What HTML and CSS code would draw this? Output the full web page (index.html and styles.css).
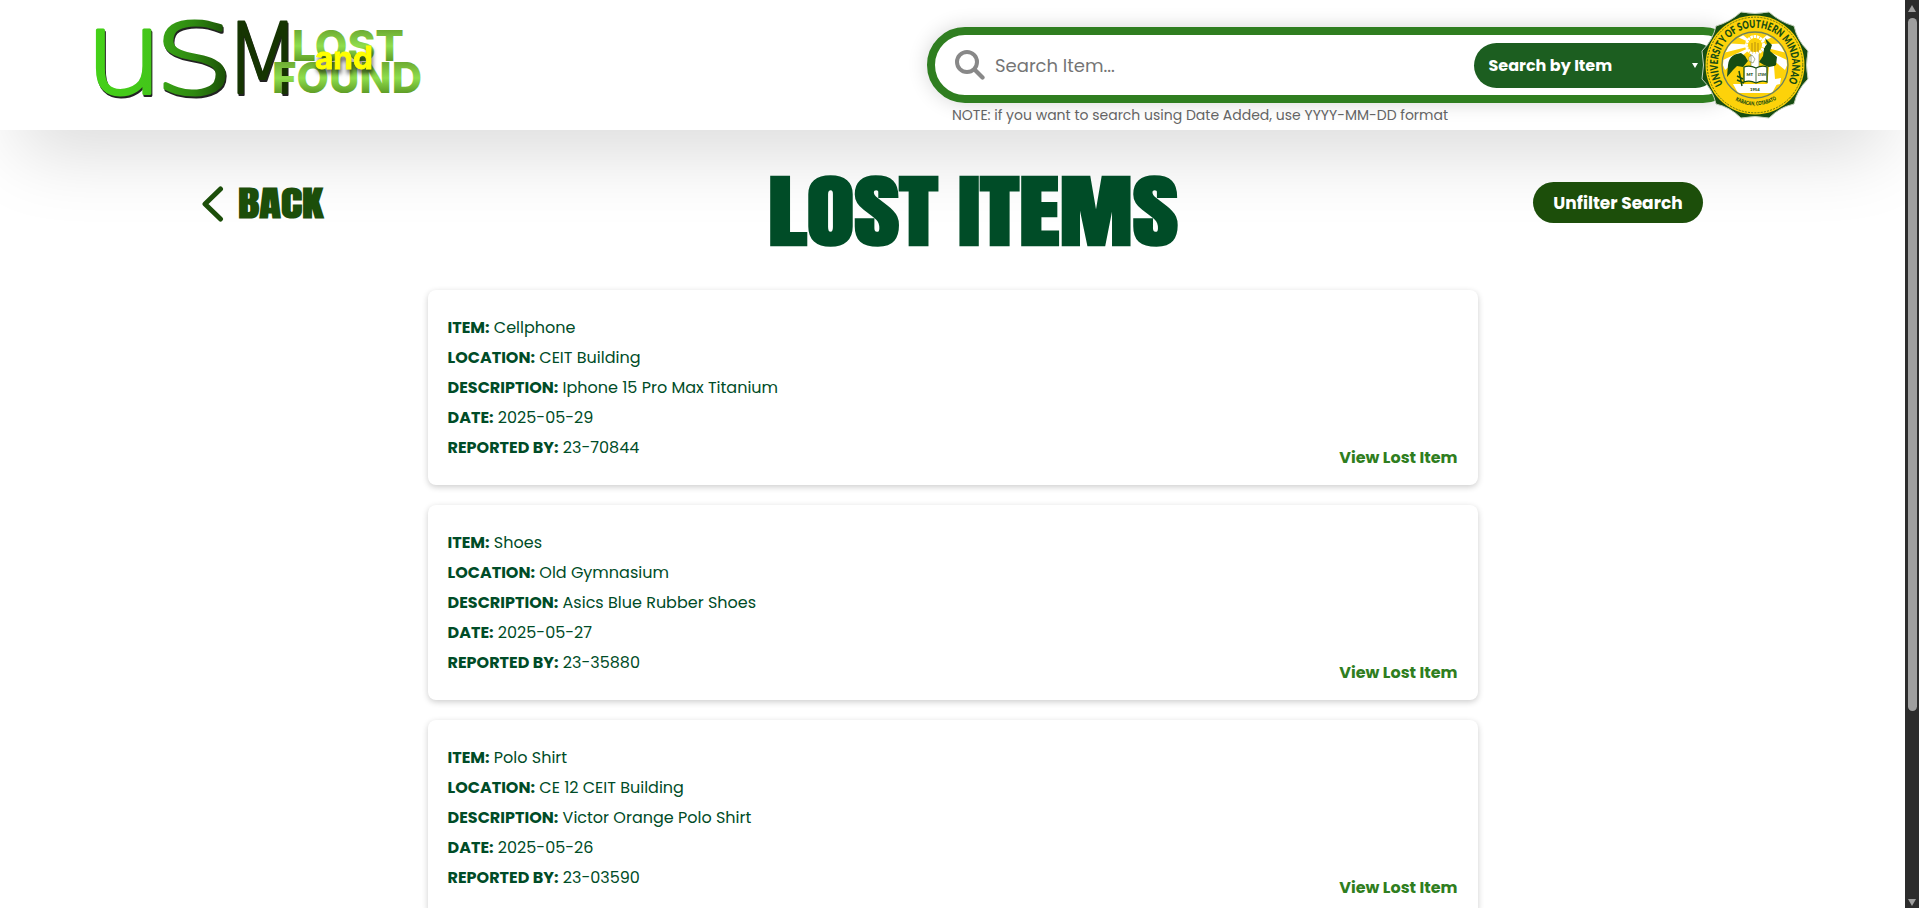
FILE: index.html
```html
<!DOCTYPE html>
<html lang="en">
<head>
<meta charset="utf-8">
<title>USM Lost and Found</title>
<link rel="stylesheet" href="styles.css">
</head>
<body>
<div class="page">
  <header class="header">
    <svg class="logo" viewBox="0 0 340 90" role="img" aria-label="USM Lost and Found">
      <defs>
        <linearGradient id="gu" x1="0" x2="1"><stop offset="0" stop-color="#45d318"/><stop offset="1" stop-color="#43c31a"/></linearGradient>
        <linearGradient id="gs" x1="0" x2="1"><stop offset="0" stop-color="#3cac17"/><stop offset=".5" stop-color="#2e8810"/><stop offset="1" stop-color="#174205"/></linearGradient>
        <linearGradient id="gl" x1="0" y1="0" x2="0" y2="1"><stop offset=".2" stop-color="#6ca931"/><stop offset=".52" stop-color="#8fde4d"/><stop offset=".8" stop-color="#609f27"/></linearGradient>
      </defs>
      <g class="script">
        <text x="-6" y="79" textLength="80" lengthAdjust="spacingAndGlyphs" font-size="115" fill="url(#gu)" stroke="url(#gu)">u</text>
        <text x="64" y="80" textLength="80" lengthAdjust="spacingAndGlyphs" font-size="98" fill="url(#gs)" stroke="url(#gs)">S</text>
        <text x="134" y="79" textLength="77" lengthAdjust="spacingAndGlyphs" font-size="98" fill="#163502" stroke="#163502" stroke-width="2">M</text>
      </g>
      <g class="block" fill="url(#gl)">
        <text x="202" y="47" textLength="112" lengthAdjust="spacingAndGlyphs">LOST</text>
        <text x="182" y="79" textLength="150" lengthAdjust="spacingAndGlyphs">FOUND</text>
      </g>
      <text class="and" x="225" y="55" textLength="58" lengthAdjust="spacingAndGlyphs">and</text>
    </svg>
    <div class="search">
      <div class="bar">
        <svg class="glass" viewBox="0 0 30 30"><circle cx="12" cy="12" r="10" fill="none" stroke="#888" stroke-width="4"/><path d="M19.500 19.500 27.500 27.500" stroke="#888" stroke-width="4.300" stroke-linecap="round"/></svg>
        <span class="placeholder">Search Item...</span>
        <div class="select"><span>Search by Item</span><i class="caret"></i></div>
        <svg class="seal" viewBox="-55 -55 110 110">
          <defs>
            <path id="top" d="M-32 19A37.200 37.200 0 1 1 32 19"/>
            <path id="bot" d="M-27 30A40 40 0 0 0 27 30"/>
            <clipPath id="inner"><circle r="32"/></clipPath>
          </defs>
          <path class="rim" d="M-14-53Q0-50 14-53Q25-43 39-39Q42-25 53-14Q50 0 53 14Q42 25 39 39Q25 42 14 53Q0 50-14 53Q-25 42-39 39Q-42 25-53 14Q-50 0-53-14Q-42-25-39-39Q-25-43-14-53Z"/>
          <circle r="49.500" fill="#fdd20a"/>
          <circle r="47.800" fill="none" stroke="#5c7310" stroke-width="1" stroke-dasharray="2 1.200"/>
          <circle r="33" fill="#fdd20a" stroke="#6a8060" stroke-width="1.300"/>
          <g clip-path="url(#inner)">
            <path d="M0-20-33-22-32-12ZM0-20-34-4-30 5ZM0-20-26-32-18-35ZM0-20 33-22 32-12ZM0-20 34-4 30 5ZM0-20 26-32 18-35Z" fill="#fff"/>
            <path d="M-27 0C-26-9-20-11-14-12L-10-9-7-4-12 2-18 1-22 5-28 12Z" fill="#174d12"/>
            <path d="M10-27 17-20 15-14 22-8 21 0 16 3 9 0 4-3 8-9 9-17 12-21Z" fill="#174d12"/>
            <path d="M-22 19 22 19 17 28-17 28Z" fill="#fff"/>
            <path d="M14 2 19 1 20 14 26 13 25 19 12 22Z" fill="#fff"/>
            <path d="M-16 6-13 21M-18 11-12 14M-18 15-11 18" stroke="#174d12" stroke-width="1.500"/>
            <path d="M-4-12H4V4H-4ZM-6-8-3-10 0-6-2-2-6-4Z" fill="#fff" stroke="#718052" stroke-width=".6"/>
            <circle cy="-20" r="8.500" fill="#fdd20a" stroke="#fff" stroke-width="3" stroke-dasharray="2.500 .7"/>
            <path d="M-3-22V-13M0-23V-13M3-22V-13" stroke="#b78f0d"/>
            <path d="M-11 2Q-5 0 1 3Q7 0 12 2V17Q7 15 1 18Q-5 15-11 17Z" fill="#fff" stroke="#174d12" stroke-width="1.300"/>
            <path d="M1 3V18" stroke="#174d12" stroke-width=".8"/>
          </g>
          <text class="ring"><textPath href="#top" textLength="154" lengthAdjust="spacingAndGlyphs">UNIVERSITY OF SOUTHERN MINDANAO</textPath></text>
          <text class="ring small"><textPath href="#bot" startOffset="9" textLength="43" lengthAdjust="spacingAndGlyphs">KABACAN, COTABATO</textPath></text>
          <text class="tiny" x="-8.500" y="11">MT</text><text class="tiny" x="3" y="11" textLength="8" lengthAdjust="spacingAndGlyphs">LTSM</text><text class="tiny" x="-5" y="26">1954</text>
        </svg>
      </div>
      <p class="note">NOTE: if you want to search using Date Added, use YYYY-MM-DD format</p>
    </div>
  </header>
  <main>
    <div class="titlebar">
      <div class="back">
        <svg class="chev" viewBox="0 0 22 36"><path d="M18.500 3 3 18 18.500 33" fill="none" stroke="#1c4e0a" stroke-width="5" stroke-linecap="round" stroke-linejoin="round"/></svg>
        <svg class="backword" viewBox="0 0 90 40"><text x="0" y="34" textLength="85" lengthAdjust="spacingAndGlyphs">BACK</text></svg>
      </div>
      <h1><svg class="title" viewBox="0 0 416 90"><text x="0" y="77" textLength="170" lengthAdjust="spacingAndGlyphs">LOST</text><text x="190" y="77" textLength="220" lengthAdjust="spacingAndGlyphs">ITEMS</text></svg></h1>
      <div class="unfilter">Unfilter Search</div>
    </div>
    <div class="cards">
      <article class="card">
        <p><b>ITEM:</b> Cellphone</p>
        <p><b>LOCATION:</b> CEIT Building</p>
        <p><b>DESCRIPTION:</b> Iphone 15 Pro Max Titanium</p>
        <p><b>DATE:</b> 2025-05-29</p>
        <p><b>REPORTED BY:</b> 23-70844</p>
        <a>View Lost Item</a>
      </article>
      <article class="card">
        <p><b>ITEM:</b> Shoes</p>
        <p><b>LOCATION:</b> Old Gymnasium</p>
        <p><b>DESCRIPTION:</b> Asics Blue Rubber Shoes</p>
        <p><b>DATE:</b> 2025-05-27</p>
        <p><b>REPORTED BY:</b> 23-35880</p>
        <a>View Lost Item</a>
      </article>
      <article class="card">
        <p><b>ITEM:</b> Polo Shirt</p>
        <p><b>LOCATION:</b> CE 12 CEIT Building</p>
        <p><b>DESCRIPTION:</b> Victor Orange Polo Shirt</p>
        <p><b>DATE:</b> 2025-05-26</p>
        <p><b>REPORTED BY:</b> 23-03590</p>
        <a>View Lost Item</a>
      </article>
    </div>
  </main>
</div>
<div class="scroll"><i class="up"></i><div class="thumb"></div><i class="down"></i></div>
</body>
</html>
```
FILE: styles.css
```css
* { box-sizing: border-box; margin: 0; padding: 0; }
body { display: flex; width: 100%; height: 908px; overflow: hidden; background: #fff; font-family: Poppins, Inter, "Open Sans", sans-serif; color: #004c27; }
.page { flex: 1; height: 908px; overflow: hidden; }

.header { display: flex; justify-content: space-between; height: 130px; padding: 14px 164px 0 90px; background: #fff; box-shadow: 0 42px 75px -20px rgba(0, 0, 0, .15); }
.logo { width: 340px; height: 90px; overflow: visible; }
.script { font-family: "DejaVu Sans", sans-serif; font-weight: 200; stroke-width: 3; stroke-linejoin: round; filter: drop-shadow(1px 2.5px 0 #222); }
.block { font: 800 43px Inter, sans-serif; }
.and { font: 700 31px Inter, sans-serif; fill: #ff0; stroke: #ff0; stroke-width: .8; filter: drop-shadow(1px 4px 2px rgba(0, 0, 0, .65)); }

.search { width: 814px; padding-top: 13px; }
.bar { position: relative; display: flex; align-items: center; height: 76px; padding: 0 15px 0 20px; border: 8px solid #2f7e20; border-radius: 38px; background: #fff; box-shadow: 0 0 20px rgba(0, 0, 0, .16); }
.glass { width: 30px; height: 30px; }
.placeholder { margin-left: 10px; font-size: 18px; color: #757575; }
.select { display: flex; align-items: center; justify-content: space-between; width: 244px; height: 45px; margin-left: auto; padding: 0 20px 0 14.5px; border-radius: 23px; background: #1c5e20; color: #fff; font-size: 16px; font-weight: 700; }
.caret { border: 3px solid transparent; border-top: 5px solid #fff; border-bottom: 0; }
.seal { position: absolute; left: 765px; top: -25px; width: 110px; height: 110px; }
.rim { fill: #174d12; stroke: #c5d0bd; stroke-width: 1; }
.ring { font: 800 11px Lato, sans-serif; fill: #174d12; }
.ring.small { font-size: 5.5px; }
.tiny { font: 800 4.2px Lato, sans-serif; fill: #174d12; }
.note { margin: 2px 0 0 25px; font-size: 14px; line-height: 20px; color: #666; }

.titlebar { display: flex; align-items: flex-start; justify-content: space-between; height: 160px; padding: 0 202px 0 200px; }
.back { display: flex; align-items: center; width: 568px; padding-top: 53px; }
.chev { width: 22px; height: 36px; margin-left: 2px; }
.backword { width: 90px; height: 40px; margin: 1px 0 0 14px; overflow: visible; font: 900 35.5px Impact, Anton, Inter, sans-serif; fill: #1c4e0a; }
h1 { padding-top: 38px; }
.title { display: block; width: 416px; height: 90px; overflow: visible; font: 900 79px Impact, Anton, Inter, sans-serif; fill: #004c27; }
.unfilter { display: flex; align-items: center; justify-content: center; width: 170px; height: 41px; margin: 52px 0 0 349px; padding-top: 1px; border-radius: 21px; background: #1c4e0a; color: #fff; font-size: 17px; font-weight: 700; }

.cards { display: flex; flex-direction: column; gap: 20px; width: 1050px; margin-left: 428px; }
.card { position: relative; height: 195px; flex: none; padding: 23px 19.5px; border-radius: 8px; background: #fff; box-shadow: 0 2px 6px rgba(0, 0, 0, .2); font-size: 16px; }
.card p { height: 30px; line-height: 30px; }
.card a { position: absolute; right: 20.5px; bottom: 15px; line-height: 24px; color: #2f7e20; font-weight: 700; }

.scroll { display: flex; flex-direction: column; align-items: center; width: 14px; height: 908px; padding: 5px 0 2px; background: #2c2c2c; }
.thumb { width: 9px; height: 693px; margin-top: 6px; border-radius: 5px; background: #9f9f9f; }
.up, .down { border: 4.5px solid transparent; }
.up { border-bottom: 7px solid #9f9f9f; border-top: 0; }
.down { margin-top: auto; border-top: 7px solid #9f9f9f; border-bottom: 0; }
```
